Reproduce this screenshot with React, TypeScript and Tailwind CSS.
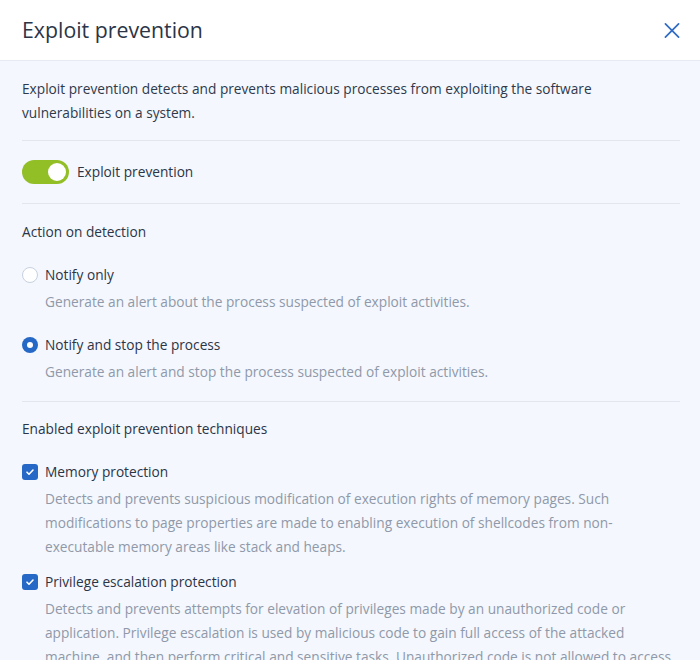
import React from 'react';

const FONT = { fontFamily: '"Open Sans", "Noto Sans", sans-serif' };

function Divider() {
  return <div className="h-px bg-[#e1e6ef]" />;
}

function Radio({ checked }: { checked?: boolean }) {
  return checked ? (
    <span className="w-4 h-4 rounded-full bg-[#2668c5] flex items-center justify-center shrink-0">
      <span className="w-[6px] h-[6px] rounded-full bg-white" />
    </span>
  ) : (
    <span className="w-4 h-4 rounded-full bg-white border border-[#c7d1e0] shrink-0" />
  );
}

function Checkbox() {
  return (
    <span className="w-4 h-4 rounded-[3px] bg-[#2668c5] flex items-center justify-center shrink-0">
      <svg width="10" height="10" viewBox="0 0 10 10" fill="none">
        <path d="M2 5.2l2 2L8 3" stroke="white" strokeWidth="1.6" strokeLinecap="round" strokeLinejoin="round" />
      </svg>
    </span>
  );
}

function Option({
  control,
  label,
  children,
  className,
}: {
  control: React.ReactNode;
  label: string;
  children: React.ReactNode;
  className?: string;
}) {
  return (
    <div className={className}>
      <div className="flex items-center gap-[7px] h-6">
        {control}
        <span className="text-[13.7px] text-[#2b3546]">{label}</span>
      </div>
      <p className="pl-[23px] mt-[3px] text-[13.7px] leading-6 text-[#8f99a9]">{children}</p>
    </div>
  );
}

export default function App() {
  return (
    <div className="w-[700px] h-[660px] overflow-hidden bg-[#f4f7fd]" style={FONT}>
      <div className="h-[61px] bg-white border-b border-[#e6ebf3] flex items-center justify-between pl-[22px] pr-[20px]">
        <h1 className="text-[21.3px] text-[#2b3546] font-normal">Exploit prevention</h1>
        <button className="w-4 h-4 flex items-center justify-center">
          <svg width="17" height="17" viewBox="0 0 17 17" fill="none">
            <path d="M1.5 1.5l14 14M15.5 1.5l-14 14" stroke="#2f6bc5" strokeWidth="1.8" strokeLinecap="round" />
          </svg>
        </button>
      </div>

      <div className="pl-[22px] pr-[20px]">
        <p className="pt-4 text-[13.7px] leading-6 text-[#2e3a4c]">
          Exploit prevention detects and prevents malicious processes from exploiting the software
          vulnerabilities on a system.
        </p>
        <div className="mt-[15px]">
          <Divider />
        </div>

        <div className="h-[62px] flex items-center gap-2">
          <span className="w-[47px] h-6 rounded-full bg-[#93bf26] flex items-center justify-end pr-[3px]">
            <span className="w-[18px] h-[18px] rounded-full bg-white" />
          </span>
          <span className="text-[13.7px] text-[#2b3546]">Exploit prevention</span>
        </div>
        <Divider />

        <div className="pt-4 pb-[17px]">
          <p className="text-[13.7px] leading-6 text-[#2b3546]">Action on detection</p>
          <Option className="mt-[19px]" control={<Radio />} label="Notify only">
            Generate an alert about the process suspected of exploit activities.
          </Option>
          <Option className="mt-[19px]" control={<Radio checked />} label="Notify and stop the process">
            Generate an alert and stop the process suspected of exploit activities.
          </Option>
        </div>
        <Divider />

        <div className="pt-[15px]">
          <p className="text-[13.7px] leading-6 text-[#2b3546]">Enabled exploit prevention techniques</p>
          <Option className="mt-[19px]" control={<Checkbox />} label="Memory protection">
            Detects and prevents suspicious modification of execution rights of memory pages. Such
            modifications to page properties are made to enabling execution of shellcodes from
            non-executable memory areas like stack and heaps.
          </Option>
          <Option className="mt-[11px]" control={<Checkbox />} label="Privilege escalation protection">
            Detects and prevents attempts for elevation of privileges made by an unauthorized code or
            application. Privilege escalation is used by malicious code to gain full access of the attacked
            machine, and then perform critical and sensitive tasks. Unauthorized code is not allowed to access
            critical system resources or modify system settings.
          </Option>
        </div>
      </div>
    </div>
  );
}
